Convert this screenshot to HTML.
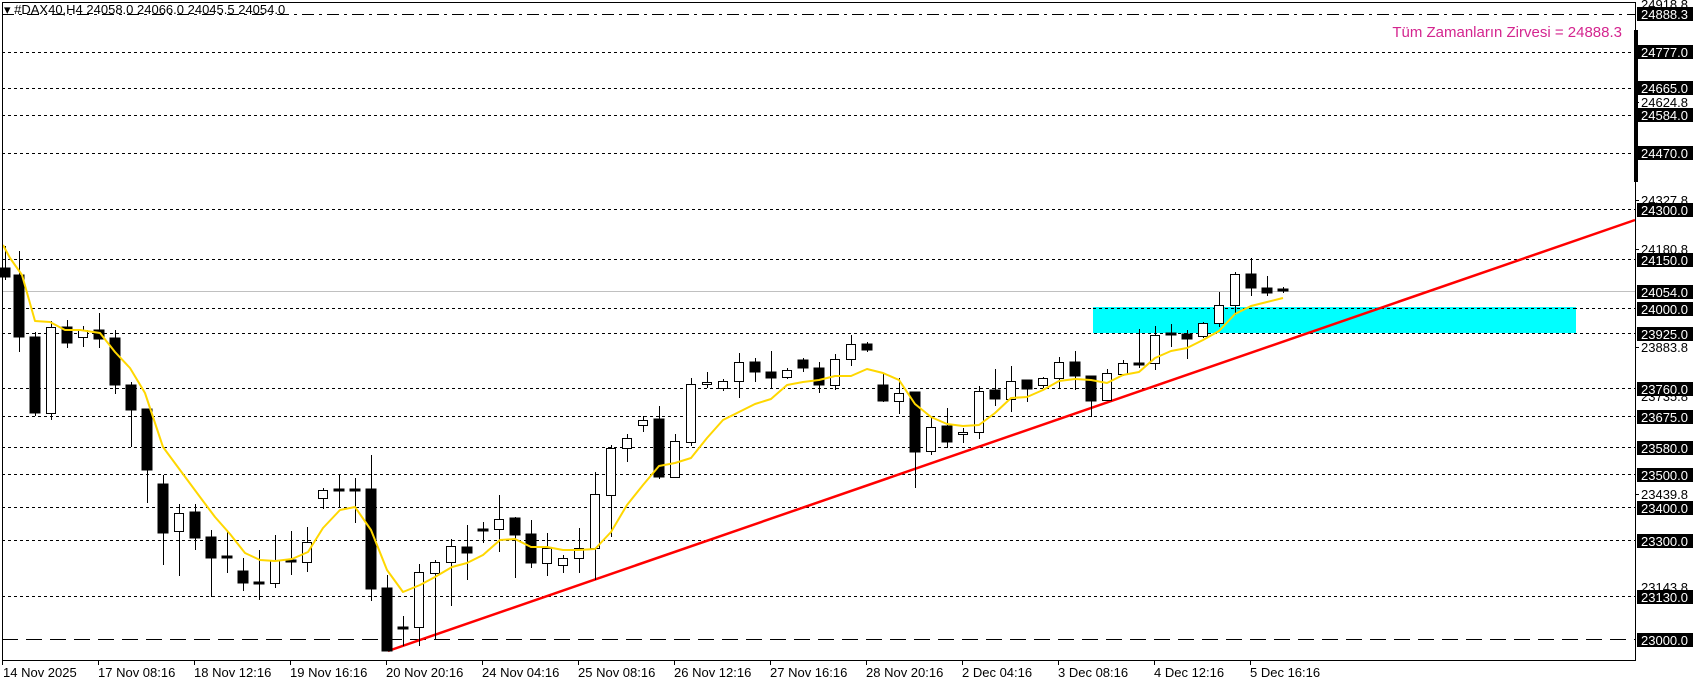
<!DOCTYPE html>
<html><head><meta charset="utf-8"><style>
html,body{margin:0;padding:0;background:#fff;width:1699px;height:684px;overflow:hidden}
svg{display:block;font-family:"Liberation Sans",sans-serif}
.bx{fill:#000}
.lb{fill:#fff;font-size:13px}
.pl{fill:#000;font-size:13px}
.dt{fill:#000;font-size:13px}
</style></head><body>
<svg width="1699" height="684" viewBox="0 0 1699 684" xmlns="http://www.w3.org/2000/svg">
<g stroke="#000" stroke-width="1" fill="none" shape-rendering="crispEdges">
<line x1="2" y1="14.5" x2="1635" y2="14.5" stroke-dasharray="12,5,3,5"/>
<g stroke-dasharray="3,3">
<line x1="2" y1="52.5" x2="1635" y2="52.5"/>
<line x1="2" y1="88.5" x2="1635" y2="88.5"/>
<line x1="2" y1="115.5" x2="1635" y2="115.5"/>
<line x1="2" y1="153.5" x2="1635" y2="153.5"/>
<line x1="2" y1="209.5" x2="1635" y2="209.5"/>
<line x1="2" y1="259.5" x2="1635" y2="259.5"/>
<line x1="2" y1="308.5" x2="1635" y2="308.5"/>
<line x1="2" y1="333.5" x2="1635" y2="333.5"/>
<line x1="2" y1="388.5" x2="1635" y2="388.5"/>
<line x1="2" y1="416.5" x2="1635" y2="416.5"/>
<line x1="2" y1="447.5" x2="1635" y2="447.5"/>
<line x1="2" y1="474.5" x2="1635" y2="474.5"/>
<line x1="2" y1="507.5" x2="1635" y2="507.5"/>
<line x1="2" y1="540.5" x2="1635" y2="540.5"/>
<line x1="2" y1="596.5" x2="1635" y2="596.5"/>
</g>
<line x1="2" y1="639.5" x2="1635" y2="639.5" stroke-dasharray="16,8"/>
<line x1="2" y1="291.5" x2="1635" y2="291.5" stroke="#c0c0c0"/>
</g>
<rect x="1093" y="307" width="483" height="26" fill="#00ffff"/>
<line x1="1093" y1="308.5" x2="1576" y2="308.5" stroke="#000" stroke-dasharray="3,3" shape-rendering="crispEdges"/>
<line x1="388" y1="651" x2="1635" y2="220" stroke="#ff0000" stroke-width="2.5"/>
<g stroke="#000" stroke-width="1" shape-rendering="crispEdges">
<g>
<line x1="5.5" y1="246" x2="5.5" y2="280"/>
<line x1="19.5" y1="251" x2="19.5" y2="352"/>
<line x1="35.5" y1="332" x2="35.5" y2="416"/>
<line x1="51.5" y1="321" x2="51.5" y2="420"/>
<line x1="67.5" y1="320" x2="67.5" y2="348"/>
<line x1="83.5" y1="326" x2="83.5" y2="347"/>
<line x1="99.5" y1="313" x2="99.5" y2="348"/>
<line x1="115.5" y1="330" x2="115.5" y2="394"/>
<line x1="131.5" y1="382" x2="131.5" y2="447"/>
<line x1="147.5" y1="409" x2="147.5" y2="503"/>
<line x1="163.5" y1="475" x2="163.5" y2="565"/>
<line x1="179.5" y1="504" x2="179.5" y2="576"/>
<line x1="195.5" y1="504" x2="195.5" y2="550"/>
<line x1="211.5" y1="530" x2="211.5" y2="597"/>
<line x1="227.5" y1="530" x2="227.5" y2="573"/>
<line x1="243.5" y1="558" x2="243.5" y2="591"/>
<line x1="259.5" y1="550" x2="259.5" y2="600"/>
<line x1="275.5" y1="535" x2="275.5" y2="588"/>
<line x1="291.5" y1="531" x2="291.5" y2="575"/>
<line x1="307.5" y1="527" x2="307.5" y2="572"/>
<line x1="323.5" y1="488" x2="323.5" y2="509"/>
<line x1="339.5" y1="474" x2="339.5" y2="507"/>
<line x1="355.5" y1="478" x2="355.5" y2="523"/>
<line x1="371.5" y1="455" x2="371.5" y2="601"/>
<line x1="387.5" y1="575" x2="387.5" y2="651"/>
<line x1="403.5" y1="616" x2="403.5" y2="646"/>
<line x1="419.5" y1="564" x2="419.5" y2="646"/>
<line x1="435.5" y1="560" x2="435.5" y2="640"/>
<line x1="451.5" y1="539" x2="451.5" y2="606"/>
<line x1="467.5" y1="525" x2="467.5" y2="580"/>
<line x1="483.5" y1="522" x2="483.5" y2="543"/>
<line x1="499.5" y1="495" x2="499.5" y2="552"/>
<line x1="515.5" y1="517" x2="515.5" y2="578"/>
<line x1="531.5" y1="520" x2="531.5" y2="568"/>
<line x1="547.5" y1="533" x2="547.5" y2="576"/>
<line x1="563.5" y1="555" x2="563.5" y2="573"/>
<line x1="579.5" y1="528" x2="579.5" y2="573"/>
<line x1="595.5" y1="472" x2="595.5" y2="580"/>
<line x1="611.5" y1="445" x2="611.5" y2="537"/>
<line x1="627.5" y1="434" x2="627.5" y2="462"/>
<line x1="643.5" y1="416" x2="643.5" y2="432"/>
<line x1="659.5" y1="406" x2="659.5" y2="479"/>
<line x1="675.5" y1="434" x2="675.5" y2="478"/>
<line x1="691.5" y1="378" x2="691.5" y2="446"/>
<line x1="707.5" y1="372" x2="707.5" y2="388"/>
<line x1="723.5" y1="379" x2="723.5" y2="391"/>
<line x1="739.5" y1="353" x2="739.5" y2="398"/>
<line x1="755.5" y1="358" x2="755.5" y2="382"/>
<line x1="771.5" y1="351" x2="771.5" y2="388"/>
<line x1="787.5" y1="368" x2="787.5" y2="379"/>
<line x1="803.5" y1="358" x2="803.5" y2="372"/>
<line x1="819.5" y1="362" x2="819.5" y2="393"/>
<line x1="835.5" y1="354" x2="835.5" y2="390"/>
<line x1="851.5" y1="335" x2="851.5" y2="366"/>
<line x1="867.5" y1="342" x2="867.5" y2="352"/>
<line x1="883.5" y1="374" x2="883.5" y2="402"/>
<line x1="899.5" y1="378" x2="899.5" y2="414"/>
<line x1="915.5" y1="392" x2="915.5" y2="488"/>
<line x1="931.5" y1="417" x2="931.5" y2="455"/>
<line x1="947.5" y1="408" x2="947.5" y2="448"/>
<line x1="963.5" y1="428" x2="963.5" y2="443"/>
<line x1="979.5" y1="386" x2="979.5" y2="439"/>
<line x1="995.5" y1="369" x2="995.5" y2="406"/>
<line x1="1011.5" y1="366" x2="1011.5" y2="412"/>
<line x1="1027.5" y1="380" x2="1027.5" y2="402"/>
<line x1="1043.5" y1="377" x2="1043.5" y2="388"/>
<line x1="1059.5" y1="357" x2="1059.5" y2="389"/>
<line x1="1075.5" y1="351" x2="1075.5" y2="390"/>
<line x1="1091.5" y1="376" x2="1091.5" y2="417"/>
<line x1="1107.5" y1="369" x2="1107.5" y2="400"/>
<line x1="1123.5" y1="360" x2="1123.5" y2="376"/>
<line x1="1139.5" y1="329" x2="1139.5" y2="368"/>
<line x1="1155.5" y1="326" x2="1155.5" y2="370"/>
<line x1="1171.5" y1="324" x2="1171.5" y2="347"/>
<line x1="1187.5" y1="330" x2="1187.5" y2="359"/>
<line x1="1203.5" y1="322" x2="1203.5" y2="338"/>
<line x1="1219.5" y1="292" x2="1219.5" y2="327"/>
<line x1="1235.5" y1="272" x2="1235.5" y2="315"/>
<line x1="1251.5" y1="258" x2="1251.5" y2="296"/>
<line x1="1267.5" y1="276" x2="1267.5" y2="296"/>
<line x1="1283.5" y1="287" x2="1283.5" y2="293"/>
</g>
<g fill="#000">
<rect x="0" y="268" width="10" height="9"/>
<rect x="14" y="275" width="10" height="62"/>
<rect x="30" y="337" width="10" height="76"/>
<rect x="62" y="327" width="10" height="16"/>
<rect x="94" y="330" width="10" height="9"/>
<rect x="110" y="338" width="10" height="47"/>
<rect x="126" y="385" width="10" height="25"/>
<rect x="142" y="409" width="10" height="61"/>
<rect x="158" y="484" width="10" height="49"/>
<rect x="190" y="512" width="10" height="26"/>
<rect x="206" y="537" width="10" height="21"/>
<rect x="222" y="556" width="10" height="2"/>
<rect x="238" y="571" width="10" height="12"/>
<rect x="254" y="582" width="10" height="2"/>
<rect x="286" y="560" width="10" height="2"/>
<rect x="334" y="489" width="10" height="2"/>
<rect x="350" y="489" width="10" height="2"/>
<rect x="366" y="489" width="10" height="100"/>
<rect x="382" y="588" width="10" height="63"/>
<rect x="398" y="627" width="10" height="2"/>
<rect x="462" y="547" width="10" height="6"/>
<rect x="478" y="529" width="10" height="2"/>
<rect x="510" y="518" width="10" height="17"/>
<rect x="526" y="534" width="10" height="29"/>
<rect x="654" y="419" width="10" height="58"/>
<rect x="750" y="362" width="10" height="10"/>
<rect x="766" y="372" width="10" height="6"/>
<rect x="798" y="360" width="10" height="8"/>
<rect x="814" y="368" width="10" height="17"/>
<rect x="862" y="344" width="10" height="6"/>
<rect x="878" y="385" width="10" height="16"/>
<rect x="910" y="392" width="10" height="60"/>
<rect x="942" y="426" width="10" height="16"/>
<rect x="990" y="390" width="10" height="9"/>
<rect x="1022" y="380" width="10" height="9"/>
<rect x="1070" y="362" width="10" height="14"/>
<rect x="1086" y="376" width="10" height="25"/>
<rect x="1134" y="363" width="10" height="2"/>
<rect x="1166" y="333" width="10" height="2"/>
<rect x="1182" y="334" width="10" height="5"/>
<rect x="1246" y="274" width="10" height="14"/>
<rect x="1262" y="288" width="10" height="5"/>
<rect x="1278" y="289" width="10" height="2"/>
</g>
<g fill="#fff">
<rect x="46.5" y="327.5" width="9" height="86"/>
<rect x="78.5" y="330.5" width="9" height="7"/>
<rect x="174.5" y="513.5" width="9" height="18"/>
<rect x="270.5" y="560.5" width="9" height="23"/>
<rect x="302.5" y="542.5" width="9" height="20"/>
<rect x="318.5" y="490.5" width="9" height="8"/>
<rect x="414.5" y="572.5" width="9" height="55"/>
<rect x="430.5" y="562.5" width="9" height="11"/>
<rect x="446.5" y="546.5" width="9" height="16"/>
<rect x="494.5" y="519.5" width="9" height="10"/>
<rect x="542.5" y="548.5" width="9" height="15"/>
<rect x="558.5" y="558.5" width="9" height="7"/>
<rect x="574.5" y="548.5" width="9" height="10"/>
<rect x="590.5" y="494.5" width="9" height="54"/>
<rect x="606.5" y="448.5" width="9" height="47"/>
<rect x="622.5" y="438.5" width="9" height="10"/>
<rect x="638.5" y="420.5" width="9" height="5"/>
<rect x="670.5" y="441.5" width="9" height="36"/>
<rect x="686.5" y="384.5" width="9" height="58"/>
<rect x="702.5" y="382.5" width="9" height="2"/>
<rect x="718.5" y="381.5" width="9" height="7"/>
<rect x="734.5" y="362.5" width="9" height="19"/>
<rect x="782.5" y="370.5" width="9" height="7"/>
<rect x="830.5" y="359.5" width="9" height="26"/>
<rect x="846.5" y="344.5" width="9" height="15"/>
<rect x="894.5" y="393.5" width="9" height="8"/>
<rect x="926.5" y="427.5" width="9" height="24"/>
<rect x="958.5" y="432.5" width="9" height="2"/>
<rect x="974.5" y="391.5" width="9" height="41"/>
<rect x="1006.5" y="381.5" width="9" height="18"/>
<rect x="1038.5" y="378.5" width="9" height="7"/>
<rect x="1054.5" y="362.5" width="9" height="16"/>
<rect x="1102.5" y="373.5" width="9" height="27"/>
<rect x="1118.5" y="363.5" width="9" height="11"/>
<rect x="1150.5" y="335.5" width="9" height="28"/>
<rect x="1198.5" y="323.5" width="9" height="13"/>
<rect x="1214.5" y="305.5" width="9" height="18"/>
<rect x="1230.5" y="274.5" width="9" height="31"/>
</g>
</g>
<polyline fill="none" stroke="#ffd700" stroke-width="2" stroke-linejoin="round" points="3,245 10,258 22,275 35,321 50,322 65,330 80,330 100,333 115,352 130,368 145,393 163,447 180,470 200,497 215,517 230,534 245,553 260,560 275,561 292,559 308,552 323,528 340,510 355,507 371,530 387,570 403,592 420,585 435,577 452,567 467,563 483,555 500,540 515,539 531,547 547,547 563,550 579,550 595,549 611,532 627,505 643,485 659,466 675,463 691,458 707,438 723,420 739,412 755,404 771,399 787,385 803,382 819,380 835,376 851,376 867,369 883,373 899,380 915,404 931,417 947,424 963,426 979,425 995,413 1011,398 1027,397 1043,390 1059,381 1075,379 1091,380 1107,383 1123,375 1139,372 1155,358 1171,351 1187,348 1203,340 1219,331 1235,314 1251,306 1267,302 1283,298"/>
<g stroke="#000" fill="none" shape-rendering="crispEdges">
<line x1="2.5" y1="2" x2="2.5" y2="660"/>
<line x1="2" y1="2.5" x2="1635" y2="2.5"/>
<line x1="1635.5" y1="2" x2="1635.5" y2="661"/>
<line x1="2" y1="660.5" x2="1636" y2="660.5"/>
</g>
<rect x="1634" y="30" width="4" height="152" fill="#000"/>
<rect x="3" y="3" width="288" height="14" fill="#fff"/>
<line x1="2" y1="14.5" x2="320" y2="14.5" stroke="#000" stroke-dasharray="12,5,3,5"/>
<text x="4" y="14" font-size="13" fill="#000">▾ #DAX40,H4  24058.0 24066.0 24045.5 24054.0</text>
<text x="1622" y="37" font-size="15" fill="#d4258f" text-anchor="end">Tüm Zamanların Zirvesi = 24888.3</text>
<g>
<text x="1641" y="9" class="pl">24918.8</text>
<text x="1641" y="107" class="pl">24624.8</text>
<text x="1641" y="205" class="pl">24327.8</text>
<text x="1641" y="254" class="pl">24180.8</text>
<text x="1641" y="352" class="pl">23883.8</text>
<text x="1641" y="401" class="pl">23735.8</text>
<text x="1641" y="499" class="pl">23439.8</text>
<text x="1641" y="592" class="pl">23143.8</text>
</g>
<g stroke="#000" shape-rendering="crispEdges">
<line x1="1636" y1="102.5" x2="1639" y2="102.5"/><line x1="1636" y1="200.5" x2="1639" y2="200.5"/><line x1="1636" y1="249.5" x2="1639" y2="249.5"/><line x1="1636" y1="347.5" x2="1639" y2="347.5"/><line x1="1636" y1="494.5" x2="1639" y2="494.5"/>
</g>
<g>
<rect class="bx" x="1637" y="7" width="56" height="14"/><text class="lb" x="1641" y="19">24888.3</text>
<rect class="bx" x="1637" y="45" width="56" height="14"/><text class="lb" x="1641" y="57">24777.0</text>
<rect class="bx" x="1637" y="81" width="56" height="14"/><text class="lb" x="1641" y="93">24665.0</text>
<rect class="bx" x="1637" y="108" width="56" height="14"/><text class="lb" x="1641" y="120">24584.0</text>
<rect class="bx" x="1637" y="146" width="56" height="14"/><text class="lb" x="1641" y="158">24470.0</text>
<rect class="bx" x="1637" y="203" width="56" height="14"/><text class="lb" x="1641" y="215">24300.0</text>
<rect class="bx" x="1637" y="253" width="56" height="14"/><text class="lb" x="1641" y="265">24150.0</text>
<rect class="bx" x="1637" y="285" width="56" height="14"/><text class="lb" x="1641" y="297">24054.0</text>
<rect class="bx" x="1637" y="302" width="56" height="14"/><text class="lb" x="1641" y="314">24000.0</text>
<rect class="bx" x="1637" y="327" width="56" height="14"/><text class="lb" x="1641" y="339">23925.0</text>
<rect class="bx" x="1637" y="382" width="56" height="14"/><text class="lb" x="1641" y="394">23760.0</text>
<rect class="bx" x="1637" y="410" width="56" height="14"/><text class="lb" x="1641" y="422">23675.0</text>
<rect class="bx" x="1637" y="441" width="56" height="14"/><text class="lb" x="1641" y="453">23580.0</text>
<rect class="bx" x="1637" y="468" width="56" height="14"/><text class="lb" x="1641" y="480">23500.0</text>
<rect class="bx" x="1637" y="501" width="56" height="14"/><text class="lb" x="1641" y="513">23400.0</text>
<rect class="bx" x="1637" y="534" width="56" height="14"/><text class="lb" x="1641" y="546">23300.0</text>
<rect class="bx" x="1637" y="590" width="56" height="14"/><text class="lb" x="1641" y="602">23130.0</text>
<rect class="bx" x="1637" y="633" width="56" height="14"/><text class="lb" x="1641" y="645">23000.0</text>
</g>
<g stroke="#000" shape-rendering="crispEdges">
<line x1="2.5" y1="661" x2="2.5" y2="665"/><line x1="98.5" y1="661" x2="98.5" y2="665"/><line x1="194.5" y1="661" x2="194.5" y2="665"/><line x1="290.5" y1="661" x2="290.5" y2="665"/><line x1="386.5" y1="661" x2="386.5" y2="665"/><line x1="482.5" y1="661" x2="482.5" y2="665"/><line x1="578.5" y1="661" x2="578.5" y2="665"/><line x1="674.5" y1="661" x2="674.5" y2="665"/><line x1="770.5" y1="661" x2="770.5" y2="665"/><line x1="866.5" y1="661" x2="866.5" y2="665"/><line x1="962.5" y1="661" x2="962.5" y2="665"/><line x1="1058.5" y1="661" x2="1058.5" y2="665"/><line x1="1154.5" y1="661" x2="1154.5" y2="665"/><line x1="1250.5" y1="661" x2="1250.5" y2="665"/>
</g>
<g>
<text class="dt" x="3" y="677">14 Nov 2025</text>
<text class="dt" x="98" y="677">17 Nov 08:16</text>
<text class="dt" x="194" y="677">18 Nov 12:16</text>
<text class="dt" x="290" y="677">19 Nov 16:16</text>
<text class="dt" x="386" y="677">20 Nov 20:16</text>
<text class="dt" x="482" y="677">24 Nov 04:16</text>
<text class="dt" x="578" y="677">25 Nov 08:16</text>
<text class="dt" x="674" y="677">26 Nov 12:16</text>
<text class="dt" x="770" y="677">27 Nov 16:16</text>
<text class="dt" x="866" y="677">28 Nov 20:16</text>
<text class="dt" x="962" y="677">2 Dec 04:16</text>
<text class="dt" x="1058" y="677">3 Dec 08:16</text>
<text class="dt" x="1154" y="677">4 Dec 12:16</text>
<text class="dt" x="1250" y="677">5 Dec 16:16</text>
</g>
</svg>
</body></html>
